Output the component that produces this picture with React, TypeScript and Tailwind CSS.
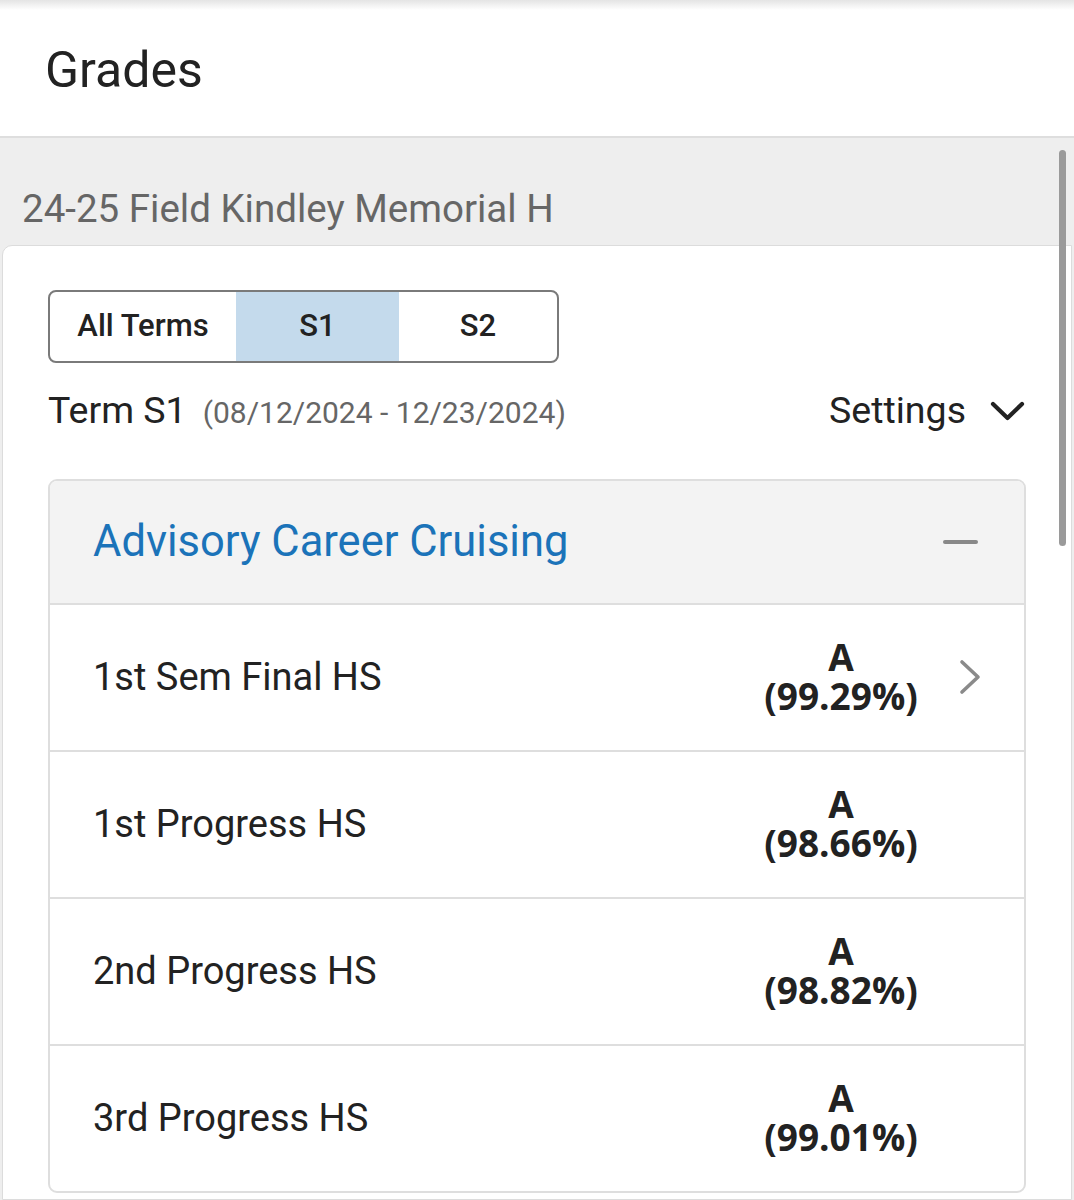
type GradeRow = {
  label: string;
  letter: string;
  percent: string;
  link?: boolean;
};

const rows: GradeRow[] = [
  { label: "1st Sem Final HS", letter: "A", percent: "(99.29%)", link: true },
  { label: "1st Progress HS", letter: "A", percent: "(98.66%)" },
  { label: "2nd Progress HS", letter: "A", percent: "(98.82%)" },
  { label: "3rd Progress HS", letter: "A", percent: "(99.01%)" },
];

const terms = ["All Terms", "S1", "S2"];

export default function App() {
  return (
    <div className="relative h-[1200px] w-[1074px] overflow-hidden bg-white font-['Roboto',sans-serif] text-[#222]">
      <div className="h-[10px] bg-gradient-to-b from-[#e4e4e4] to-white" />
      <header className="flex h-[128px] items-center border-b-2 border-[#dedede] px-[45px] pb-[6px]">
        <h1 className="text-[50px] leading-none text-[#222]">Grades</h1>
      </header>

      <div className="bg-[#eeeeee] pt-[52px]">
        <p className="px-[22px] text-[38.5px] leading-none text-[#666]">24-25 Field Kindley Memorial H</p>
        <div className="mt-[16px] ml-[2px] mr-[2px] rounded-tl-[10px] border border-[#dcdcdc] bg-white px-[45px] pt-[44px] pb-[6px]">
          <div className="flex h-[73px] w-[511px] overflow-hidden rounded-[8px] border-2 border-[#7a7a7a] text-[31px] font-medium">
            {terms.map((term) => (
              <div
                key={term}
                className={
                  term === "S1"
                    ? "flex w-[163px] items-center justify-center bg-[#c4daec]"
                    : term === "All Terms"
                      ? "flex w-[186px] items-center justify-center"
                      : "flex flex-1 items-center justify-center"
                }
              >
                {term}
              </div>
            ))}
          </div>

          <div className="mt-[19px] flex items-center justify-between">
            <div className="flex items-baseline gap-[16px]">
              <span className="text-[37.5px]">Term S1</span>
              <span className="text-[30px] text-[#666]">(08/12/2024 - 12/23/2024)</span>
            </div>
            <div className="flex items-center gap-[24px] pr-[1px]">
              <span className="text-[37.5px]">Settings</span>
              <svg width="35" height="20" viewBox="0 0 35 20" fill="none" className="mt-[2px]">
                <polyline points="3,3 17.5,17 32,3" stroke="#222" strokeWidth="4.2" strokeLinecap="round" strokeLinejoin="round" />
              </svg>
            </div>
          </div>

          <section className="mt-[41px] overflow-hidden rounded-[9px] border-2 border-[#dedede]">
            <div className="flex h-[124px] items-center justify-between border-b-2 border-[#dedede] bg-[#f3f3f3] pl-[43px] pr-[46px]">
              <h2 className="text-[43.5px] text-[#1b73b9]">Advisory Career Cruising</h2>
              <div className="h-[4px] w-[35px] rounded-full bg-[#888]" />
            </div>
            {rows.map((row, i) => (
              <div
                key={row.label}
                className={
                  i < rows.length - 1
                    ? "flex h-[147px] items-center border-b-2 border-[#dedede] pl-[43px] pr-[36px]"
                    : "flex h-[145px] items-center pl-[43px] pr-[36px]"
                }
              >
                <span className="flex-1 text-[38px]">{row.label}</span>
                <div className="flex w-[170px] flex-col items-center font-['Open_Sans',sans-serif] text-[37px] font-bold text-[#222]">
                  <span className="h-[38px] leading-[38px]">{row.letter}</span>
                  <span className="h-[40px] leading-[40px]">{row.percent}</span>
                </div>
                <div className="ml-[26px] flex w-[36px] justify-center">
                  {row.link ? (
                    <svg width="24" height="38" viewBox="0 0 24 38" fill="none">
                      <polyline points="4,4 20,19 4,34" stroke="#8a8a8a" strokeWidth="3.6" strokeLinecap="round" strokeLinejoin="round" />
                    </svg>
                  ) : null}
                </div>
              </div>
            ))}
          </section>
        </div>
      </div>

      <div className="absolute top-[150px] right-[8px] h-[396px] w-[7px] rounded-full bg-[#9a9a9a]" />
    </div>
  );
}
